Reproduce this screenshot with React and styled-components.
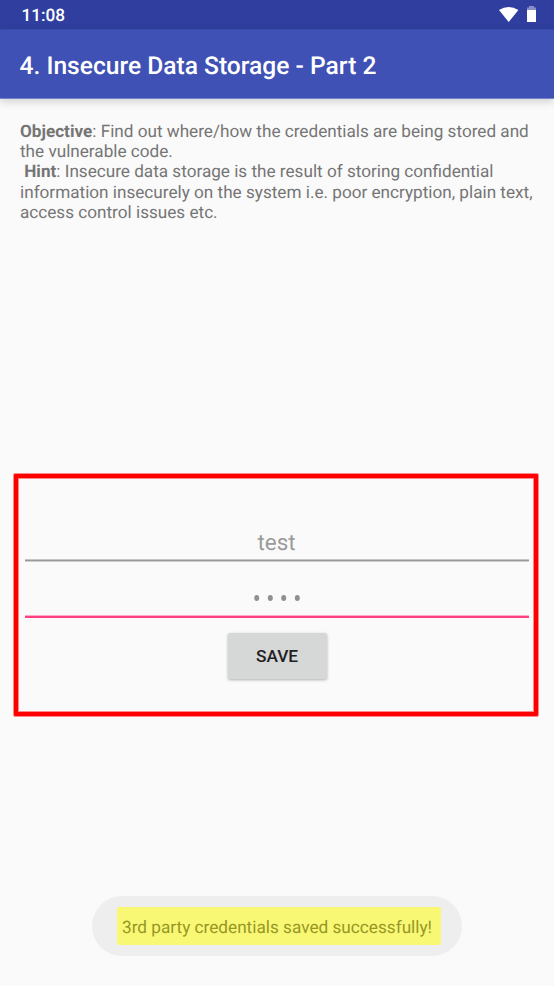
import React from "react";
import styled, { createGlobalStyle } from "styled-components";

const Global = createGlobalStyle`
  * { box-sizing: border-box; }
  body { margin: 0; background: #fafafa; font-family: Roboto, sans-serif; text-rendering: geometricPrecision; }
`;
const Screen = styled.main`
  width: 554px; height: 986px; background: #fafafa; overflow: hidden;
  display: flex; flex-direction: column;
`;
const StatusBar = styled.div`
  height: 29px; flex: none; background: #303f9f; color: #fff;
  display: flex; align-items: flex-start; justify-content: space-between;
  padding: 6px 18px 0 21.5px; font-size: 17.2px; line-height: 20px; font-weight: 500;
`;
const Clock = styled.span`line-height: 21px;`;
const StatusIcons = styled.div`display: flex; align-items: flex-end; gap: 8px;`;
const AppBar = styled.header`
  height: 70px; flex: none; background: #3f51b5; color: #fff;
  border-top: 1px solid #3949ab; border-bottom: 1px solid #7582c9;
  padding: 6px 19.5px 0; display: flex; align-items: center;
  box-shadow: 0 3px 8px rgba(0,0,0,.16);
`;
const Title = styled.h1`
  margin: 0; font-size: 24.6px; line-height: 32px; font-weight: 500; white-space: nowrap;
`;
const Description = styled.div`
  margin-top: 22.5px; padding-left: 20px; height: 101.5px; flex: none;
  font-size: 17.15px; color: #757575;
`;
const Line = styled.div`
  height: 20.4px; line-height: 21px; white-space: pre; display: flex;
`;
const Form = styled.section`
  margin: 251px 16px 0 14px; height: 242px; flex: none; border: 4px solid #f00; border-radius: 1px;
  box-shadow: 0 0 0 1px rgba(255,0,0,.45), inset 0 0 0 1px rgba(255,0,0,.45);
  padding: 51px 5px 0 7px; display: flex; flex-direction: column; align-items: center;
`;
const Field = styled.div`
  width: 504px; height: ${p => p.$focused ? 56 : 33}px; flex: none;
  background: ${p => p.$focused
    ? "linear-gradient(#fdacc8 1px, #ff4081 1px) bottom / 100% 3px no-repeat"
    : "linear-gradient(#c5c5c5 1px, #999 1px, #999 2px, #cdcdcd 2px) bottom / 100% 3px no-repeat"};
  color: #9a9a9a; font-size: 22.4px; line-height: 28px; text-align: center; padding-right: 1px;
`;
const Dots = styled.svg`display: block; margin: 32px auto 0;`;
const Save = styled.button`
  width: 99px; height: 46px; margin-top: 15px; padding: 0; border: 0; border-radius: 2px;
  background: #d6d7d7; color: #212121; font: 500 17.3px Roboto, sans-serif;
  box-shadow: 0 1px 3px rgba(0,0,0,.3);
`;
const Toast = styled.div`
  align-self: center; flex: none; margin-top: 180px; width: 370px; height: 60px; border-radius: 30px;
  background: #eee; display: flex; align-items: flex-start; justify-content: center; padding: 11px 0 0 3px;
`;
const Highlight = styled.span`
  width: 324px; height: 37.5px; background: #f8f874; color: #979725; border-radius: 2px;
  font-size: 17.2px; line-height: 43px; padding-left: 5.5px; white-space: nowrap;
`;

export default function App() {
  return <><Global /><Screen>
    <StatusBar><Clock>11:08</Clock><StatusIcons>
      <svg width="20" height="16" viewBox="0 0 20 16"><path d="M0 4Q9.7-2 19.4 4L9.7 16Z" fill="#fff" /></svg>
      <svg width="9" height="16" viewBox="0 0 9 16" fill="#fff"><path d="M2 0h5v1.5h2V4H0V1.5h2z" opacity=".42" /><path d="M0 4h9v12H0z" /></svg>
    </StatusIcons></StatusBar>
    <AppBar><Title>4. Insecure Data Storage - Part 2</Title></AppBar>
    <Description>
      <Line><b>Objective</b><span>: Find out where/how the credentials are being stored and</span></Line>
      <Line>the vulnerable code.</Line>
      <Line><b>{" Hint"}</b><span>: Insecure data storage is the result of storing confidential</span></Line>
      <Line>information insecurely on the system i.e. poor encryption, plain text,</Line>
      <Line>access control issues etc.</Line>
    </Description>
    <Form>
      <Field>test</Field>
      <Field $focused><Dots width="48" height="8" viewBox="0 0 48 8" fill="#909090">
        {[3.7, 17.3, 30.7, 44.3].map(x => <ellipse key={x} cx={x} cy="4" rx="2.5" ry="3" />)}
      </Dots></Field>
      <Save>SAVE</Save>
    </Form>
    <Toast><Highlight>3rd party credentials saved successfully!</Highlight></Toast>
  </Screen></>;
}
